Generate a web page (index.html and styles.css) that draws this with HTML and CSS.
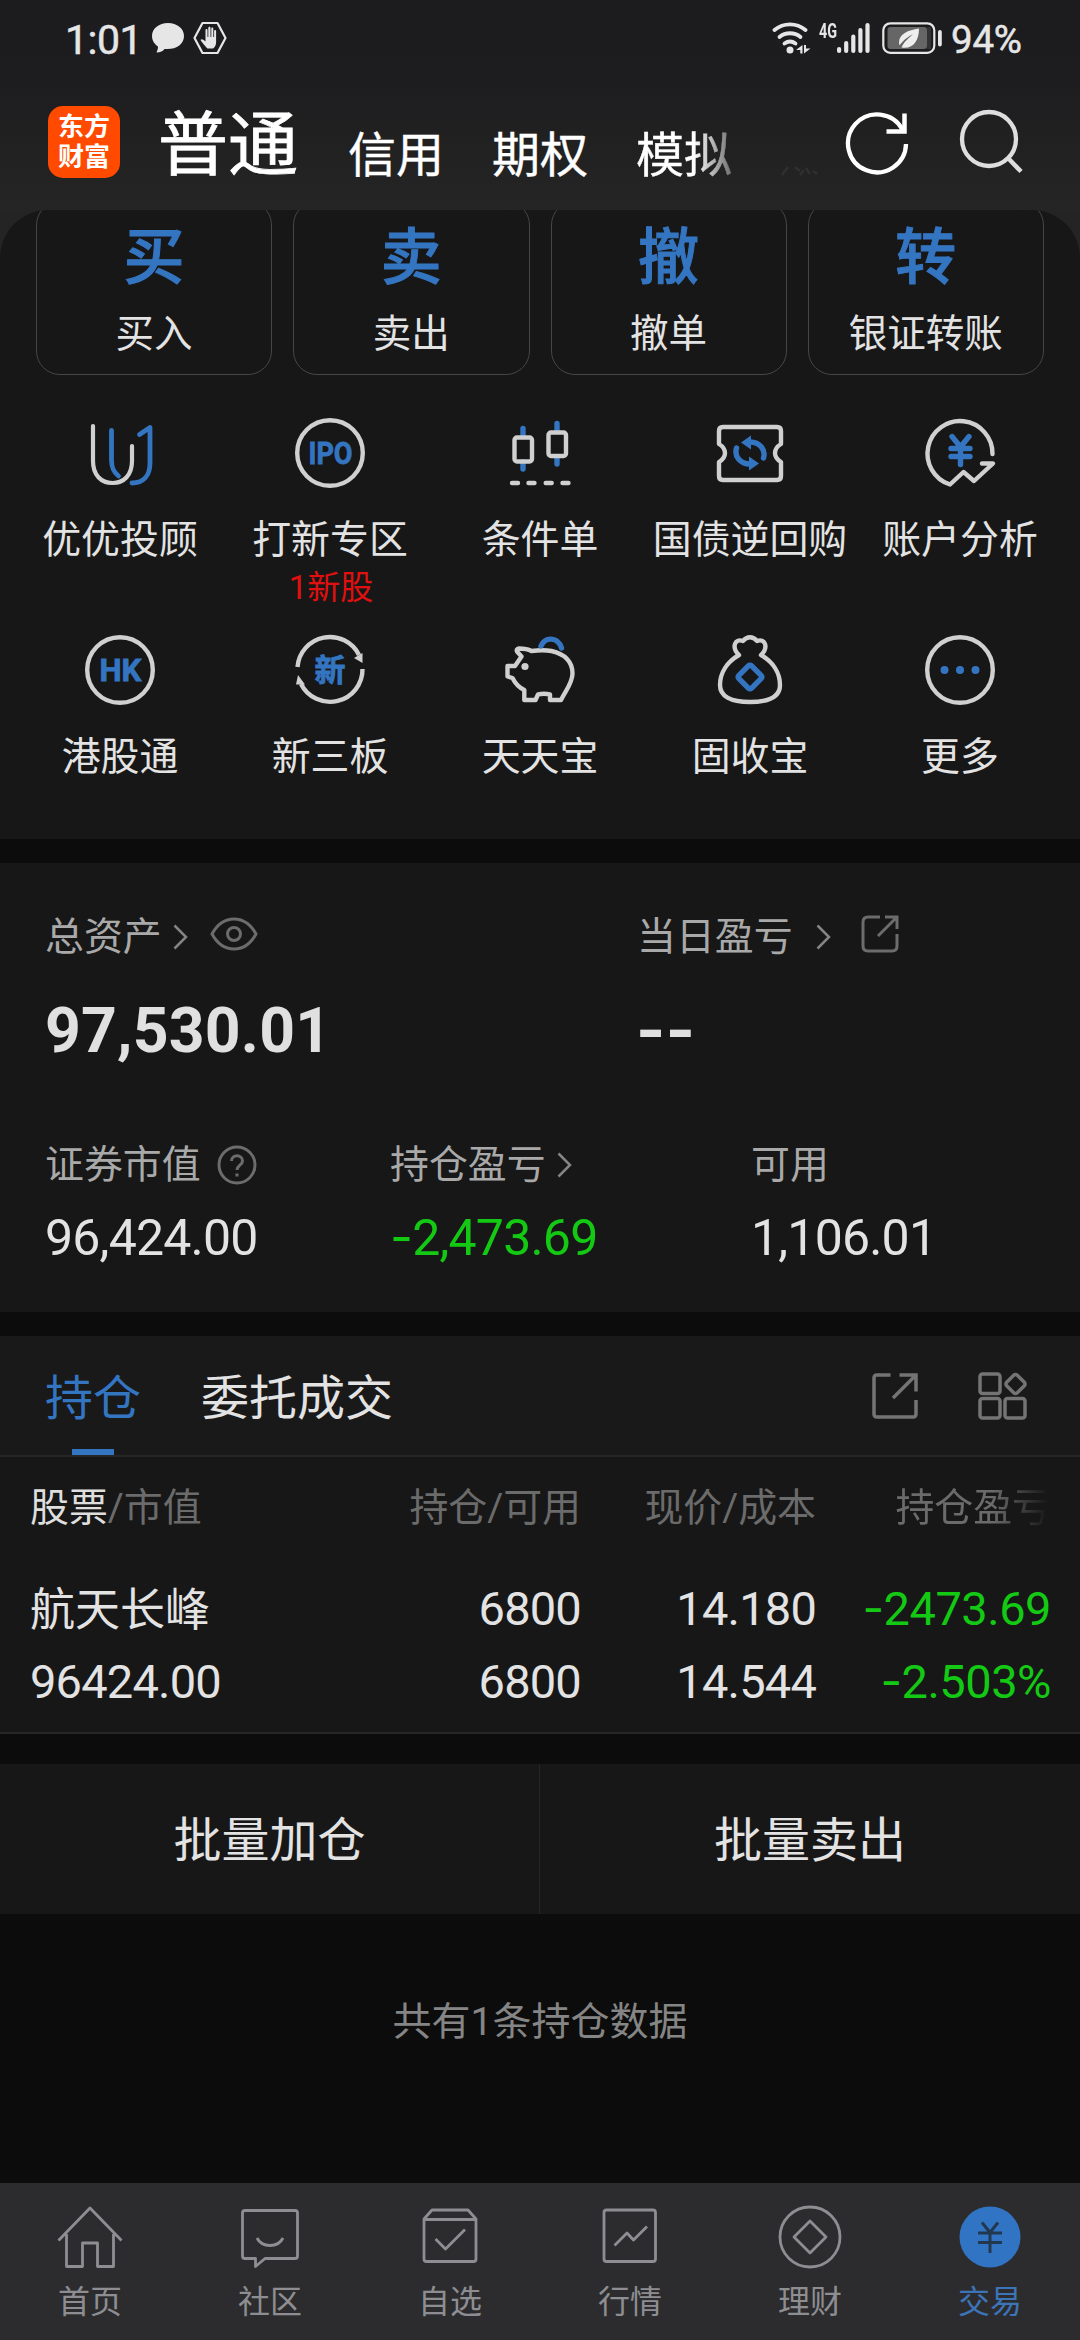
FILE: index.html
```html
<!DOCTYPE html>
<html lang="zh-CN">
<head>
<meta charset="utf-8">
<title>交易</title>
<link rel="stylesheet" href="styles.css">
</head>
<body>
<div class="app">
  <header class="top">
    <div class="status">
      <span class="clock">1:01</span>
      <svg class="s-chat" width="32" height="32" viewBox="0 0 32 32"><path fill="#e6e6e6" d="M16 1C7 1 0 6.500 0 14c0 5 3 8.500 6 10.500 0 2.500-.7 4-1.500 6 4 0 6.500-1.500 8-3.500C24 28 32 22.500 32 14 32 6.500 25 1 16 1z"/></svg>
      <svg class="s-hex" width="34" height="34" viewBox="0 0 34 34"><path fill="none" stroke="#e6e6e6" stroke-width="2.200" stroke-linejoin="round" d="M9.500 2h15L32.500 17l-8 15h-15L1.500 17z"/><path fill="#e6e6e6" d="M13 26c-2-2-4-5-5.500-7 1-1.300 2.500-.6 5 1.500V9c0-1.500 2-1.500 2 0v7h.8V7c0-1.600 2.200-1.600 2.200 0v9h.8V7.500c0-1.500 2-1.500 2 0V16h.8v-6c0-1.500 2-1.500 2 0v11c0 3-1 5-3 6.500h-5c-1 0-1.500-.7-2.100-1.500z"/></svg>
      <span class="spring"></span>
      <svg class="s-wifi" width="40" height="34" viewBox="0 0 40 34"><g fill="none" stroke="#e6e6e6" stroke-width="3.800" stroke-linecap="round"><path d="M2.500 9c9-7.500 22-7.500 31 0"/><path d="M7.500 16c6-5 15-5 21 0"/><path d="M12.500 22.500c4-3 7-3 11 0"/></g><circle cx="18" cy="29" r="3.500" fill="#e6e6e6"/><path fill="#e6e6e6" d="M30.500 24v8.500h-2.200v-3.500H24zM32 32.500V24h2v3.500h4.500z"/></svg>
      <span class="net">4G</span>
      <svg width="33" height="34" viewBox="0 0 33 34"><g stroke="#e6e6e6" stroke-width="4.200" stroke-linecap="round"><path d="M2.100 28v2M9.200 22v8M16.300 15.500v14.500M23.400 9v21M30.500 4v26"/></g></svg>
      <svg class="s-bat" width="60" height="34" viewBox="0 0 60 34"><rect x="1.300" y="2.300" width="51" height="29.500" rx="7" fill="none" stroke="#e6e6e6" stroke-width="2.200"/><rect x="5.500" y="6" width="39.500" height="22" rx="3" fill="#666"/><rect x="45" y="6" width="4" height="22" fill="#333"/><rect x="56" y="9" width="3.800" height="16.500" rx="1.900" fill="#e6e6e6"/><path fill="#eee" d="M37 7.500C26 9 17 13 17 21.500c0 1 .2 2 .6 2.800C21 19 27 15.500 31 13c-3 3.500-9 7-11.500 13.500C31 28.500 37 20 37 7.500z"/></svg>
      <span class="pct">94%</span>
    </div>
    <div class="nav">
      <div class="logo"><span>东方</span><span>财富</span></div>
      <div class="modes">
        <span class="mode mode-on">普通</span><span class="mode">信用</span><span class="mode">期权</span><span class="mode fade">模拟</span>
        <svg class="ghost" width="38" height="10" viewBox="0 0 38 10"><path fill="none" stroke="#303030" stroke-width="2.500" d="M2 9l6-8M15 1l5 4M20 9l4-5M26 2l4 6M33 5l4 3"/></svg>
      </div>
      <svg class="refresh" width="68" height="68" viewBox="0 0 68 68"><path fill="none" stroke="#fff" stroke-width="4.300" d="M62 35A29 29 0 1 1 58.500 20.500"/><path fill="none" stroke="#fff" stroke-width="4.500" d="M60.500 4.500v18H42.500"/></svg>
      <svg class="search" width="68" height="68" viewBox="0 0 68 68"><circle cx="30" cy="31" r="27" fill="none" stroke="#dedede" stroke-width="4.300"/><path stroke="#dedede" stroke-width="4.500" d="M48.500 49.500L62 63.500"/></svg>
    </div>
  </header>

  <div class="sheet-wrap">
  <section class="sheet">
    <div class="trades">
      <div class="trade"><b>买</b><span>买入</span></div>
      <div class="trade"><b>卖</b><span>卖出</span></div>
      <div class="trade"><b>撤</b><span>撤单</span></div>
      <div class="trade"><b>转</b><span>银证转账</span></div>
    </div>
    <div class="grid">
      <div class="item"><svg viewBox="0 0 80 80"><g fill="none" stroke-width="4.200" stroke-linecap="round" stroke-linejoin="round"><path stroke="#d0d0d0" d="M13 13v35c0 14 8 22 19.500 22S52 62 52 48V33"/><path stroke="#3475c1" stroke-width="4.800" d="M31.500 17.500v29.500c0 8 2 12 7 16M59.500 21.500l10.500-7v35.500c0 13-7 20-18 20"/></g></svg><span>优优投顾</span></div>
      <div class="item"><svg viewBox="0 0 80 80"><circle class="ln" cx="40" cy="40" r="32.800"/><text class="g" x="40.500" y="51" font-size="31" textLength="44" lengthAdjust="spacingAndGlyphs">IPO</text></svg><span>打新专区</span><em>1新股</em></div>
      <div class="item"><svg viewBox="0 0 80 80"><path class="bl" d="M23 15.500v8M23 49v7M57 10.500v8M57 44v7"/><rect class="ln" x="14.500" y="24.500" width="17.500" height="24" rx="2.500"/><rect class="ln" x="48.500" y="19.500" width="17.500" height="23.500" rx="2.500"/><path class="ln" stroke-linecap="round" d="M12 70h6M28.500 70h6M45.700 70h6M62.500 70h6"/></svg><span>条件单</span></div>
      <div class="item"><svg viewBox="0 0 80 80"><path class="ln" d="M13 14h54q4 0 4 4v13c-8 5-8 13 0 18v14q0 4-4 4H13q-4 0-4-4V49c8-5 8-13 0-18V18q0-4 4-4z"/><path class="bl" d="M26.500 35C24 43 30 51 40 51M53.500 45C56 37 50 29 40 29"/><path fill="#3475c1" d="M31 29.500l10-7v14zM49 50.500l-10-7v14z"/></svg><span>国债逆回购</span></div>
      <div class="item"><svg viewBox="0 0 80 80"><path class="ln" stroke-linecap="round" d="M72.500 41A32.500 32.500 0 1 0 30 71.500L43.500 59l10.500 9L73 50.500H62"/><path class="bl" d="M32 23.500l8.500 10.500 8.500-10.500M40.500 34v17.500M31 35.500h19M31 43.500h19"/></svg><span>账户分析</span></div>
      <div class="item"><svg viewBox="0 0 80 80"><circle class="ln" cx="40" cy="40" r="32.800"/><text class="g" x="40.500" y="51" font-size="31" textLength="42" lengthAdjust="spacingAndGlyphs">HK</text></svg><span>港股通</span></div>
      <div class="item"><svg viewBox="0 0 80 80"><path class="ln" d="M7.500 37A32.500 32.500 0 0 1 69 25M72.500 39A32.500 32.500 0 0 1 11 54"/><path fill="#d0d0d0" d="M64 28l8.500-5v10zM8 45l-2 9.500h9z"/><text class="g" x="40" y="51" font-size="31">新</text></svg><span>新三板</span></div>
      <div class="item"><svg viewBox="0 0 80 80"><path class="ln" d="M21.500 26.500L17 21.500q-1-2.500 2-3 8 0 12.500 2.500c8-1 14-1 20 0C65 24 72.500 32 72.500 43.500 72.500 53 66 60 61 70H50v-5.700q-6-1-12 0L35.500 70H24.300V60C18 57 14 51 12.500 48l-5-1.500V36h7.500l6.500-9.500z"/><circle cx="25" cy="36.500" r="3.600" fill="#d0d0d0"/><path class="bl" d="M41 16c4-9.500 17-9.500 20.500 2"/></svg><span>天天宝</span></div>
      <div class="item"><svg viewBox="0 0 80 80"><path class="ln" d="M29 25c-8-8-4-17 4-14 4-5 10-5 14 0 8-3 12 6 4 14 12 7 19 18 19 30 0 11-10 17-30 17s-30-6-30-17c0-12 7-23 19-30z"/><rect class="bl" x="31" y="38" width="18" height="18" rx="2" transform="rotate(45 40 47)"/></svg><span>固收宝</span></div>
      <div class="item"><svg viewBox="0 0 80 80"><circle class="ln" cx="40" cy="40" r="32.800"/><g fill="#3475c1"><circle cx="24.500" cy="40" r="4"/><circle cx="40" cy="40" r="4"/><circle cx="55.500" cy="40" r="4"/></g></svg><span>更多</span></div>
    </div>
  </section>
  </div>

  <section class="assets">
    <div class="row2">
      <div class="cell">
        <div class="lab">总资产<svg class="chev" width="15" height="26" viewBox="0 0 15 26"><path d="M1.500 1.500L13 13 1.500 24.500"/></svg><svg class="eye" width="48" height="34" viewBox="0 0 48 34"><path d="M2 17C13-3 35-3 46 17 35 37 13 37 2 17z"/><circle cx="24" cy="17" r="6.500"/></svg></div>
        <div class="big">97,530.01</div>
      </div>
      <div class="cell">
        <div class="lab">当日盈亏<svg class="chev far" width="15" height="26" viewBox="0 0 15 26"><path d="M1.500 1.500L13 13 1.500 24.500"/></svg><svg class="ext" width="40" height="40" viewBox="0 0 40 40"><path d="M20 3H8q-5 0-5 5v24q0 5 5 5h24q5 0 5-5V20M25 3h12v12M37 3L18 22"/></svg></div>
        <div class="big dash">--</div>
      </div>
    </div>
    <div class="row3">
      <div class="cell">
        <div class="lab">证券市值<svg class="help" width="40" height="40" viewBox="0 0 40 40"><circle cx="20" cy="20" r="18"/><path d="M14.500 16c0-7 11-7 11 0 0 4-5.500 4.500-5.500 9M20 28.500v3"/></svg></div>
        <div class="num">96,424.00</div>
      </div>
      <div class="cell">
        <div class="lab">持仓盈亏<svg class="chev" width="15" height="26" viewBox="0 0 15 26"><path d="M1.500 1.500L13 13 1.500 24.500"/></svg></div>
        <div class="num green"><u>-</u>2,473.69</div>
      </div>
      <div class="cell">
        <div class="lab">可用</div>
        <div class="num">1,106.01</div>
      </div>
    </div>
  </section>

  <section class="hold">
    <div class="tabs">
      <span class="tab tab-on">持仓</span>
      <span class="tab">委托成交</span>
      <span class="spring"></span>
      <svg class="t-ext" width="48" height="48" viewBox="0 0 48 48"><path d="M19.500 3H6q-3 0-3 3v36q0 3 3 3h36q3 0 3-3V28M28.500 3H45v16.500M44.500 3.500L22 26"/></svg>
      <svg class="t-grid" width="50" height="48" viewBox="0 0 50 48"><rect x="2" y="2" width="20" height="19.500" rx="2.500"/><rect x="2" y="26.500" width="20" height="19.500" rx="2.500"/><rect x="27" y="26.500" width="20" height="19.500" rx="2.500"/><rect x="30" y="4.500" width="15" height="15" rx="2.500" transform="rotate(45 37.500 12)"/></svg>
    </div>
    <div class="table">
      <div class="tr th"><span><i>股票</i>/市值</span><span>持仓/可用</span><span>现价/成本</span><span class="cut">持仓盈亏</span></div>
      <div class="tr"><span class="name">航天长峰</span><span>6800</span><span>14.180</span><span class="green"><u>-</u>2473.69</span></div>
      <div class="tr"><span>96424.00</span><span>6800</span><span>14.544</span><span class="green"><u>-</u>2.503%</span></div>
    </div>
  </section>

  <section class="batch"><span>批量加仓</span><span>批量卖出</span></section>
  <p class="total">共有1条持仓数据</p>

  <nav class="bar">
    <div class="bi"><svg viewBox="0 0 70 70"><path d="M3.500 37.500L35 5l31.500 32.500M11.500 31v32.500h16V40h15v23.500h16V31"/></svg><span>首页</span></div>
    <div class="bi"><svg viewBox="0 0 70 70"><path d="M10 7.500h50q2.500 0 2.500 2.500v43q0 2.500-2.500 2.500H30l-9.500 8v-8H10q-2.500 0-2.500-2.500V10q0-2.500 2.500-2.500zM22 35c5 10 21 10 26 0"/></svg><span>社区</span></div>
    <div class="bi"><svg viewBox="0 0 70 70"><path d="M9 16l8-9h36l8 9v40q0 2.500-2.500 2.500h-47Q9 58.500 9 56zM9 16.500h52M20.500 36L30.500 46 50 26.500"/></svg><span>自选</span></div>
    <div class="bi"><svg viewBox="0 0 70 70"><rect x="9" y="7" width="51.500" height="51.500" rx="2.500"/><path d="M19.500 42.500L32 30l6.500 7L52 23.500"/></svg><span>行情</span></div>
    <div class="bi"><svg viewBox="0 0 70 70"><circle cx="35" cy="34" r="30"/><path d="M35 18L51 34 35 50 19 34z"/></svg><span>理财</span></div>
    <div class="bi on"><svg viewBox="0 0 70 70"><circle class="disc" cx="35" cy="34" r="30.500"/><path class="yen" d="M27 19.500l8 10 8-10M35 29.500v20.500M23 30h24M23 39.500h24"/></svg><span>交易</span></div>
  </nav>
</div>
</body>
</html>
```
FILE: styles.css
```css
* { box-sizing: border-box; }
body {
  margin: 0;
  background: #0c0c0c;
  color: #e3e3e3;
  font-family: Roboto, "Noto Sans CJK SC", sans-serif;
}
.app { width: 1080px; height: 2340px; display: flex; flex-direction: column; overflow: hidden; }
.spring { flex: 1; }

.top { height: 210px; flex: none; background: linear-gradient(#1c1c1e 0, #1d1d1f 38%, #252525 100%); }
.status { height: 80px; padding: 0 57px 4px 65px; display: flex; align-items: center; color: #e6e6e6; }
.clock { font-size: 41px; width: 87px; line-height: 50px; padding-top: 4px; -webkit-text-stroke: .5px; letter-spacing: -.5px; }
.s-hex { margin-left: 9px; }
.net { width: 18px; font-size: 20px; font-weight: 700; line-height: 20px; margin: 0 0 15px 7px; transform: scaleX(.72); transform-origin: left; }
.s-bat { margin-left: 12px; }
.pct { font-size: 38.500px; line-height: 50px; padding: 4px 0 0 9px; width: 81px; -webkit-text-stroke: .5px; letter-spacing: -.2px; }

.nav { height: 130px; padding-left: 48px; display: flex; align-items: flex-start; }
.logo { width: 72px; height: 72px; margin-top: 26px; border-radius: 15px; background: #ff4a00; color: #fff; font-weight: 700; font-size: 26px; line-height: 30px; padding-top: 6px; display: flex; flex-direction: column; align-items: center; }
.modes { display: flex; align-items: flex-end; height: 110px; width: 713px; padding-left: 38px; color: #fff; -webkit-text-stroke: .4px; }
.mode { font-size: 48px; line-height: 60px; margin-right: 48px; padding-bottom: 4px; white-space: nowrap; }
.mode-on { font-size: 70px; line-height: 80px; margin-right: 50px; padding-bottom: 4px; -webkit-text-stroke: .8px; }
.fade { -webkit-mask-image: linear-gradient(90deg, #000 60%, rgba(0,0,0,.35)); mask-image: linear-gradient(90deg, #000 60%, rgba(0,0,0,.35)); }
.ghost { margin-bottom: 14px; }
.refresh { margin-top: 29px; margin-left: 11px; }
.search { margin-top: 28px; margin-left: 47px; flex: none; }

.sheet-wrap { height: 629px; flex: none; background: #242424; overflow: hidden; }
.sheet { height: 629px; background: #171717; border-radius: 48px 48px 0 0; overflow: hidden; }
.trades { display: grid; grid-template-columns: repeat(4, 1fr); gap: 21px; padding: 0 36px; margin-top: -9px; }
.trade { height: 174px; border: 1.500px solid #464646; border-radius: 24px; display: flex; flex-direction: column; align-items: center; }
.trade b { margin-top: 23px; height: 66px; line-height: 66px; font-size: 61px; font-weight: 500; color: #3475c1; -webkit-text-stroke: 1px #3475c1; }
.trade span { margin-top: 16px; font-size: 38.500px; line-height: 54px; }
.grid { display: grid; grid-template-columns: repeat(5, 210px); grid-auto-rows: 217px; padding: 38px 15px 0; }
.item { display: flex; flex-direction: column; align-items: center; white-space: nowrap; }
.item svg { width: 80px; height: 80px; flex: none; }
.item span { margin-top: 22px; font-size: 38.900px; line-height: 50px; }
.item em { font-style: normal; font-size: 33px; line-height: 40px; margin-top: 3px; padding-left: 2px; color: #e01010; }
.ln { fill: none; stroke: #d0d0d0; stroke-width: 4.400; stroke-linejoin: round; }
.bl { fill: none; stroke: #3475c1; stroke-width: 5.400; stroke-linecap: round; stroke-linejoin: round; }
.g { fill: #3475c1; font-weight: 700; text-anchor: middle; stroke: #3475c1; stroke-width: .8; }

.assets { height: 449px; margin-top: 24px; flex: none; background: #171717; padding-top: 49px; }
.row2 { display: grid; grid-template-columns: 592px 1fr; padding-left: 45px; height: 228px; }
.row3 { display: grid; grid-template-columns: 345px 361px 1fr; padding-left: 45px; }
.lab { height: 50px; display: flex; align-items: center; font-size: 38.900px; line-height: 50px; color: #a9a9a9; white-space: nowrap; }
.lab svg { flex: none; fill: none; stroke: #6c6c6c; stroke-width: 3; }
.chev { margin-left: 11px; }
.lab .chev { stroke: #858585; stroke-width: 2.500; }
.chev.far { margin-left: 23px; }
.eye { margin-left: 22px; margin-bottom: 7px; }
.ext { margin-left: 29px; margin-bottom: 6px; }
.help { margin-left: 16px; }
.big { font-size: 62.500px; font-weight: 700; line-height: 70px; margin-top: 34px; color: #e0e0e0; letter-spacing: .2px; }
.dash { font-family: Inter, sans-serif; letter-spacing: .5px; margin: 32px 0 0 -1px; }
.num { font-size: 50px; line-height: 60px; margin-top: 18px; letter-spacing: -.8px; }
.green, .tr .green { color: #14c914; }
u { text-decoration: none; font-family: Inter, sans-serif; line-height: 1; }

.hold { height: 398px; margin-top: 24px; flex: none; background: #171717; border-bottom: 2px solid #262626; }
.tabs { height: 121px; background: #19191a; border-bottom: 2px solid #262626; display: flex; align-items: center; padding: 0 52px 0 45px; }
.tab { font-size: 48px; line-height: 119px; height: 119px; margin-right: 60px; padding-top: 3px; }
.tab-on { color: #3475c1; background: linear-gradient(#3475c1, #3475c1) center bottom / 42px 6px no-repeat; }
.tabs svg { fill: none; stroke: #747474; stroke-width: 3.500; }
.t-grid { margin-left: 59px; }
.table { padding-left: 30px; }
.tr { display: grid; grid-template-columns: 316px 235px 235px 235px; margin-right: 29px; height: 73px; line-height: 73px; font-size: 47px; white-space: nowrap; letter-spacing: -.8px; margin-right: 0; }
.tr span { text-align: right; }
.tr span:first-child { text-align: left; }
.tr .name { font-size: 45px; letter-spacing: 0; padding-top: 2px; }
.tr.th { height: 115px; line-height: 102px; font-size: 38.900px; color: #6b6b6b; letter-spacing: 0; }
.th i { font-style: normal; color: #dedede; }
.tr .green { letter-spacing: -.5px; }
.cut { -webkit-mask-image: linear-gradient(90deg, #000 75%, transparent 99%); mask-image: linear-gradient(90deg, #000 75%, transparent 99%); }

.batch { height: 150px; margin-top: 30px; flex: none; background: #171717; display: grid; grid-template-columns: 1fr 1fr; text-align: center; font-size: 48px; line-height: 150px; }
.batch span { height: 150px; padding-top: 2px; }
.batch span:first-child { border-right: 1px solid #262626; }
.total { margin: 0; flex: 1; text-align: center; font-size: 39px; line-height: 60px; padding-top: 78px; color: #858585; }

.bar { height: 157px; flex: none; background: #2c2c2e; display: grid; grid-template-columns: repeat(6, 1fr); }
.bi { display: flex; flex-direction: column; align-items: center; padding-top: 20px; color: #8e8e92; }
.bi svg { width: 70px; height: 70px; fill: none; stroke: #8e8e92; stroke-width: 2.800; stroke-linejoin: round; }
.bi span { font-size: 32px; line-height: 40px; margin-top: 9px; }
.bi.on { color: #3c74b8; }
.bi .disc { fill: #3274c4; stroke: none; }
.bi .yen { stroke: #22384f; stroke-width: 3; }
```
